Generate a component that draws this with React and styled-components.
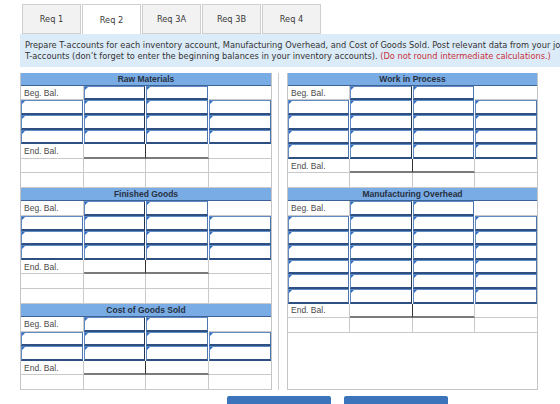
import React from "react";
import styled, { createGlobalStyle, css } from "styled-components";

const GlobalStyle = createGlobalStyle`
  html, body { margin: 0; padding: 0; background: #ffffff; overflow: hidden; }
  body { width: 560px; height: 404px; }
`;

const Page = styled.div`
  padding: 4px 0 0 20px;
  width: 700px;
`;

const TabBar = styled.div`
  display: flex;
  gap: 1px;
  margin-left: 2px;
`;

const Tab = styled.div`
  box-sizing: border-box;
  width: 59px;
  height: 30px;
  border: 1px solid #cfcfcf;
  border-bottom: ${(p) => (p.$active ? "none" : "1px solid #cfcfcf")};
  background: ${(p) => (p.$active ? "#ffffff" : "#f2f2f2")};
  display: flex;
  align-items: center;
  justify-content: center;
  font: 8.25px "DejaVu Sans", Verdana, sans-serif;
  color: #3a3a3a;
`;

const Instructions = styled.div`
  box-sizing: border-box;
  height: 33px;
  background: #dcebf8;
  padding: 6px 0 0 5px;
  font: 8.25px/11px "DejaVu Sans", Verdana, sans-serif;
  color: #333;
  white-space: nowrap;
`;

const Red = styled.span`
  color: #c8303a;
`;

const Accounts = styled.div`
  display: grid;
  grid-template-columns: 252px 15px 251px;
  margin-top: 5.5px;
  width: 518px;
`;

const Column = styled.div`
  display: flex;
  flex-direction: column;
`;

const Gutter = styled.div`
  box-sizing: border-box;
  margin-left: 6px;
  width: 1px;
  background: #cccccc;
`;

const Filler = styled.div`
  flex: 1;
  box-sizing: border-box;
  border-left: 1px solid #c4c4c4;
  border-right: 1px solid #c4c4c4;
  border-bottom: 1px solid #c4c4c4;
`;

const Table = styled.div`
  display: grid;
  grid-template-columns: repeat(4, 1fr);
  grid-template-rows: 13.4px;
  grid-auto-rows: 14.6px;
  box-sizing: border-box;
  border-left: 1px solid #c4c4c4;
  border-right: 1px solid #c4c4c4;
`;

const Header = styled.div`
  grid-column: 1 / -1;
  box-sizing: border-box;
  background: #79ace4;
  border-bottom: 1px solid #3c6296;
  display: flex;
  align-items: center;
  justify-content: center;
  font: bold 8.5px "Liberation Sans", Arial, sans-serif;
  color: #27303f;
`;

const Cell = styled.div`
  box-sizing: border-box;
  border-right: 1px solid ${(p) => (p.$tline ? "#333333" : "#c9c9c9")};
  border-bottom: 1px solid #c9c9c9;
  background: #ffffff;
  ${(p) =>
    p.$last &&
    css`
      border-right: none;
    `}
  ${(p) =>
    p.$total &&
    css`
      border-bottom: 2px solid #7b7b7b;
    `}
`;

const Label = styled(Cell)`
  display: flex;
  align-items: center;
  padding-left: 3px;
  font: 8.5px "Liberation Sans", Arial, sans-serif;
  color: #4a4a4a;
`;

const Input = styled.div`
  position: relative;
  box-sizing: border-box;
  background: #ffffff;
  border: 1px solid #5f8ac3;
  border-bottom: 2px solid #2e4f82;
  border-right: 1px solid ${(p) => (p.$tline ? "#23344f" : "#4c76ad")};
  margin-right: ${(p) => (p.$last ? "0" : "1px")};
  &::before {
    content: "";
    position: absolute;
    top: 0;
    left: 0;
    border-top: 3px solid #2f6dc2;
    border-right: 3px solid transparent;
  }
`;

const ButtonRow = styled.div`
  display: flex;
  gap: 13px;
  margin: 6px 0 0 207px;
`;

const NavButton = styled.div`
  box-sizing: border-box;
  width: 104px;
  height: 30px;
  background: #3b74ba;
  border-radius: 2px 2px 0 0;
  color: #ffffff;
  font: bold 10px "Liberation Sans", Arial, sans-serif;
  text-align: center;
  padding-top: 7px;
`;

function TAccount({ title, inputs, blank }) {
  const cells = [];
  cells.push(<Header key="h">{title}</Header>);
  cells.push(<Label key="bl">Beg. Bal.</Label>);
  cells.push(<Input key="b2" $tline />);
  cells.push(<Input key="b3" />);
  cells.push(<Cell key="b4" $last />);
  for (let r = 0; r < inputs; r++) {
    cells.push(<Input key={`i${r}a`} />);
    cells.push(<Input key={`i${r}b`} $tline />);
    cells.push(<Input key={`i${r}c`} />);
    cells.push(<Input key={`i${r}d`} $last />);
  }
  cells.push(<Label key="el">End. Bal.</Label>);
  cells.push(<Cell key="e2" $tline $total />);
  cells.push(<Cell key="e3" $total />);
  cells.push(<Cell key="e4" $last />);
  for (let r = 0; r < blank; r++) {
    cells.push(<Cell key={`k${r}a`} />);
    cells.push(<Cell key={`k${r}b`} />);
    cells.push(<Cell key={`k${r}c`} />);
    cells.push(<Cell key={`k${r}d`} $last />);
  }
  return <Table>{cells}</Table>;
}

const tabs = ["Req 1", "Req 2", "Req 3A", "Req 3B", "Req 4"];

export default function App() {
  return (
    <>
      <GlobalStyle />
      <Page>
        <TabBar>
          {tabs.map((t) => (
            <Tab key={t} $active={t === "Req 2"}>
              {t}
            </Tab>
          ))}
        </TabBar>
        <Instructions>
          Prepare T-accounts for each inventory account, Manufacturing Overhead, and Cost of Goods Sold. Post relevant data from your journal entries to the appropriate
          <br />
          T-accounts (don’t forget to enter the beginning balances in your inventory accounts). <Red>(Do not round intermediate calculations.)</Red>
        </Instructions>
        <Accounts>
          <Column>
            <TAccount title="Raw Materials" inputs={3} blank={2} />
            <TAccount title="Finished Goods" inputs={3} blank={2} />
            <TAccount title="Cost of Goods Sold" inputs={2} blank={1} />
          </Column>
          <Gutter />
          <Column>
            <TAccount title="Work in Process" inputs={4} blank={1} />
            <TAccount title="Manufacturing Overhead" inputs={6} blank={1} />
            <Filler />
          </Column>
        </Accounts>
        <ButtonRow>
          <NavButton>‹ Req 1</NavButton>
          <NavButton>Req 3A ›</NavButton>
        </ButtonRow>
      </Page>
    </>
  );
}
